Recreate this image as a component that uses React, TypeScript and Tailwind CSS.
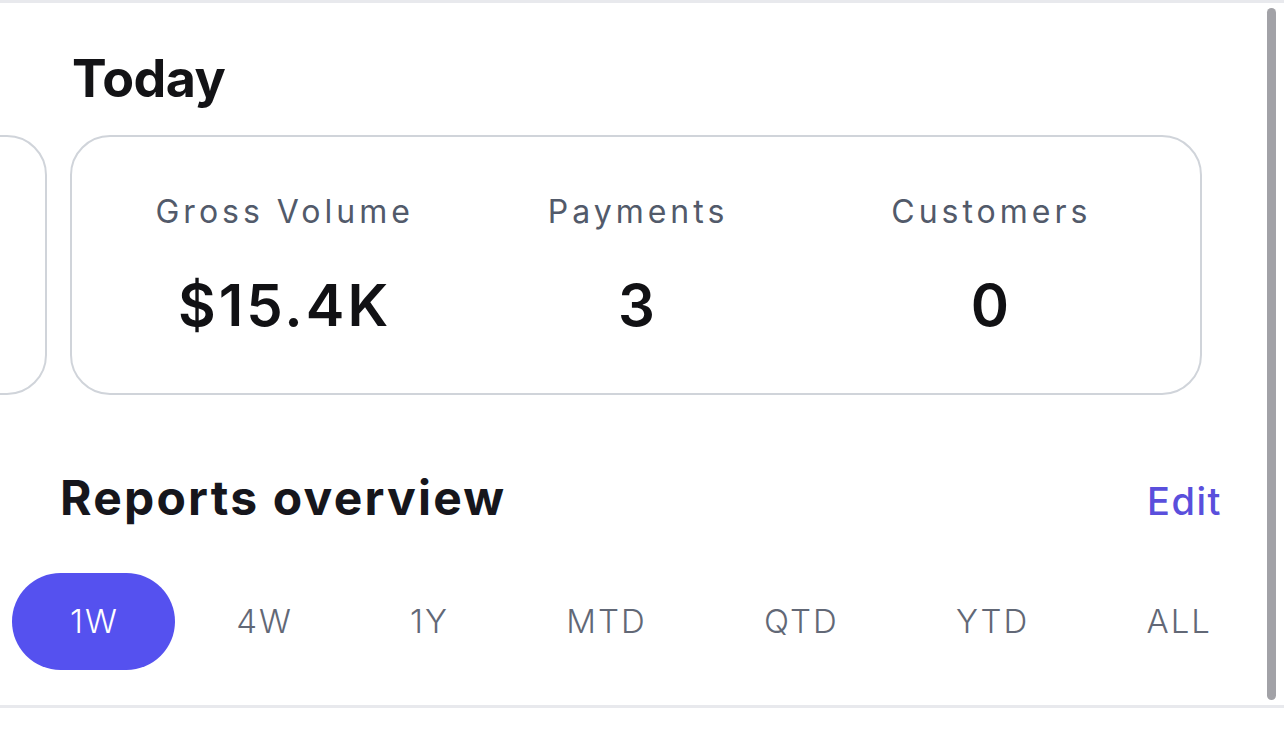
import { useState } from "react";

const stats = [
  { label: "Gross Volume", value: "$15.4K" },
  { label: "Payments", value: "3" },
  { label: "Customers", value: "0" },
];

const ranges = ["1W", "4W", "1Y", "MTD", "QTD", "YTD", "ALL"];

export default function App() {
  const [range, setRange] = useState("1W");

  return (
    <div
      className="relative h-[735px] w-[1284px] overflow-hidden bg-white"
      style={{ fontFamily: "Inter, 'Noto Sans', sans-serif" }}
    >
      <div className="border-t-[3px] border-[#e8e9ed]">
        <h2 className="mt-[50px] pl-[72px] text-[52px] font-bold leading-none tracking-[-0.01em] text-[#131316]">
          Today
        </h2>

        <div className="mt-[30px] flex gap-[23px]">
          <div className="-ml-[253px] h-[260px] w-[300px] shrink-0 rounded-[40px] border-2 border-[#d0d4da]" />
          <div className="grid h-[260px] w-[1132px] shrink-0 grid-cols-3 rounded-[40px] border-2 border-[#d0d4da] px-[34px] pt-[59px]">
            {stats.map((s) => (
              <div key={s.label} className="flex flex-col items-center pl-[4px]">
                <span className="text-[32px] leading-none tracking-[4px] text-[#525a6a]">{s.label}</span>
                <span className="mt-[48px] text-[58px] font-semibold leading-none tracking-[3px] text-[#111114]">
                  {s.value}
                </span>
              </div>
            ))}
          </div>
        </div>

        <div className="mt-[79px] flex items-baseline justify-between pl-[60px] pr-[62px]">
          <h2 className="text-[48px] font-bold leading-none tracking-[2.2px] text-[#16161c]">
            Reports overview
          </h2>
          <button className="text-[38px] font-medium leading-none tracking-[1.5px] text-[#5a4fdc]">Edit</button>
        </div>

        <div className="mt-[51px] flex justify-between pl-[12px] pr-[16px]">
          {ranges.map((r) => (
            <button
              key={r}
              onClick={() => setRange(r)}
              className={
                r === range
                  ? "flex h-[97px] items-center rounded-full bg-[#5551ef] pl-[58px] pr-[56px] text-[33px] font-light tracking-[2px] text-white"
                  : "flex h-[97px] items-center rounded-full pl-[58px] pr-[56px] text-[33px] font-light tracking-[2px] text-[#626876]"
              }
            >
              {r}
            </button>
          ))}
        </div>

        <div className="mt-[35px] border-t-[3px] border-[#e8e9ed]" />
      </div>

      <div className="absolute right-[8px] top-[8px] h-[692px] w-[9px] rounded-full bg-[#a2a2a7]" />
    </div>
  );
}
